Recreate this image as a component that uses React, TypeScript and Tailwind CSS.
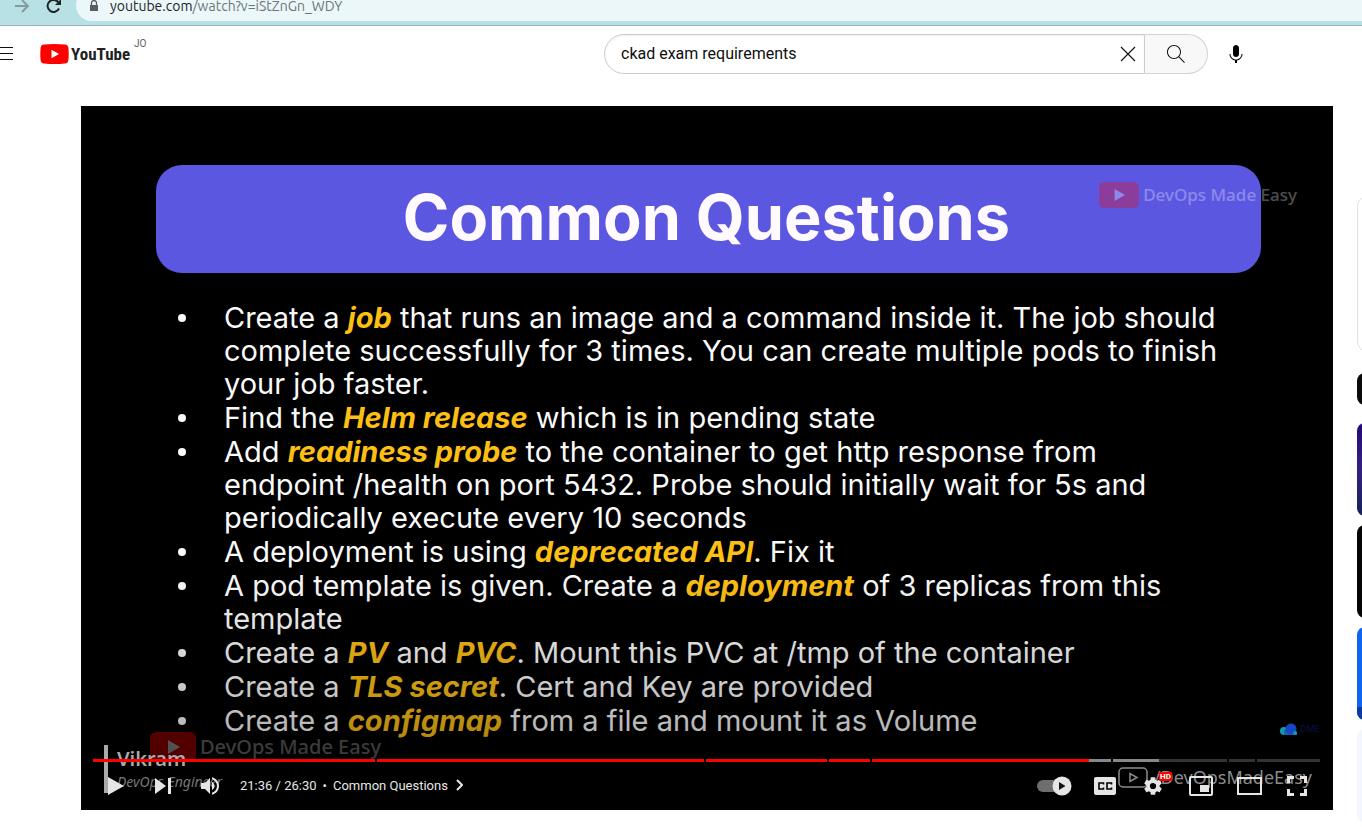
import React from "react";

type Part = { t: string; hot?: boolean };

const questions: Part[][][] = [
  [
    [{ t: "Create a " }, { t: "job", hot: true }, { t: " that runs an image and a command inside it. The job should" }],
    [{ t: "complete successfully for 3 times. You can create multiple pods to finish" }],
    [{ t: "your job faster." }],
  ],
  [[{ t: "Find the " }, { t: "Helm release", hot: true }, { t: " which is in pending state" }]],
  [
    [{ t: "Add " }, { t: "readiness probe", hot: true }, { t: " to the container to get http response from" }],
    [{ t: "endpoint /health on port 5432. Probe should initially wait for 5s and" }],
    [{ t: "periodically execute every 10 seconds" }],
  ],
  [[{ t: "A deployment is using " }, { t: "deprecated API", hot: true }, { t: ". Fix it" }]],
  [
    [{ t: "A pod template is given. Create a " }, { t: "deployment", hot: true }, { t: " of 3 replicas from this" }],
    [{ t: "template" }],
  ],
  [[{ t: "Create a " }, { t: "PV", hot: true }, { t: " and " }, { t: "PVC", hot: true }, { t: ". Mount this PVC at /tmp of the container" }]],
  [[{ t: "Create a " }, { t: "TLS secret", hot: true }, { t: ". Cert and Key are provided" }]],
  [[{ t: "Create a " }, { t: "configmap", hot: true }, { t: " from a file and mount it as Volume" }]],
];

const chapters = [
  { size: 282, played: 100, loaded: 100 },
  { size: 327, played: 100, loaded: 100 },
  { size: 121, played: 100, loaded: 100 },
  { size: 41, played: 100, loaded: 100 },
  { size: 239, played: 91, loaded: 100 },
  { size: 114, played: 0, loaded: 40 },
  { size: 26, played: 0, loaded: 0 },
  { size: 63, played: 0, loaded: 0 },
];

function BrowserBar() {
  return (
    <div className="flex h-[26px] items-start overflow-hidden border-b border-[#93b5b8] bg-[#b8e1e5] pl-[14px] font-['Ubuntu','Noto_Sans',sans-serif]">
      <button aria-label="Forward" className="-mt-0.5 w-4">
        <svg viewBox="0 0 16 16" className="size-4" fill="none" stroke="#829b9e" strokeWidth="1.8"><path d="M1 8h13M8 2l6 6-6 6" /></svg>
      </button>
      <button aria-label="Reload" className="-mt-0.5 ml-4 w-4">
        <svg viewBox="0 0 16 16" className="size-4" fill="none" stroke="#202426" strokeWidth="2"><path d="M13 10.5A6 6 0 1 1 12.5 4.5" /><path d="M15 1v6H9z" fill="#202426" stroke="none" /></svg>
      </button>
      <div className="-mt-2.5 ml-[14px] flex h-[31px] flex-1 items-center rounded-l-full bg-[#ebf7f8] pl-[14px]">
        <svg viewBox="0 0 8 12" className="h-3 w-2" fill="#5a6062"><path d="M0 5h8v6H0z" /><path d="M1.500 5.500V3a2.500 2.500 0 0 1 5 0v2.500" fill="none" stroke="#5a6062" strokeWidth="1.3" /></svg>
        <span className="ml-3 text-sm leading-5 text-[#202426]">youtube.com<span className="text-[#6b7678]">/watch?v=iStZnGn_WDY</span></span>
      </div>
    </div>
  );
}

function Masthead() {
  return (
    <header className="flex h-14 items-center">
      <div className="flex flex-1 items-center">
        <button aria-label="Guide" className="w-[13px]">
          <svg viewBox="0 0 13 14" className="h-[14px] w-[13px]" stroke="#0f0f0f"><path d="M0 .5h13M0 6.500h13M0 12.500h13" /></svg>
        </button>
        <a href="#home" className="ml-[27px] flex items-center" aria-label="YouTube Home">
          <svg viewBox="0 0 29 20" className="h-5 w-[29px]"><path d="M4 .5Q14.500-.5 25 .5 28 .8 28.400 4 29 10 28.400 16 28 19.200 25 19.500 14.500 20.500 4 19.500 1 19.200.6 16 0 10 .6 4 1 .8 4 .5z" fill="#f00" /><path d="M11.500 5.700v8.600l7.500-4.300z" fill="#fff" /></svg>
          <span className="ml-0.5 font-['Liberation_Sans_Narrow','Roboto_Condensed',Roboto,sans-serif] text-[17px] leading-6 font-bold text-[#212121]">YouTube</span>
          <span className="mb-5 ml-1 font-[Roboto,sans-serif] text-[10px] leading-3 text-[#606060]">JO</span>
        </a>
      </div>
      <form className="mr-[114px] flex h-10 w-[644px] items-center">
        <div className="flex h-10 flex-1 items-center rounded-l-full border border-[#ccc] pr-1 pl-4 shadow-[inset_0_1px_2px_#eee]">
          <input aria-label="Search" defaultValue="ckad exam requirements" className="min-w-0 flex-1 bg-transparent font-[Roboto,sans-serif] text-base text-[#0f0f0f] outline-none" />
          <button type="button" aria-label="Clear search" className="flex size-6 items-center justify-center">
            <svg viewBox="0 0 16 16" className="size-4" fill="none" stroke="#0f0f0f" strokeWidth="1.100"><path d="M1 1l14 14M15 1L1 15" /></svg>
          </button>
        </div>
        <button type="button" aria-label="Search videos" className="flex h-10 w-[63px] items-center justify-center rounded-r-full border border-l-0 border-[#d3d3d3] bg-[#f8f8f8]">
          <svg viewBox="0 0 24 24" className="size-6" fill="#0f0f0f"><path d="m20.870 20.170-5.590-5.590C16.350 13.350 17 11.750 17 10c0-3.870-3.130-7-7-7s-7 3.130-7 7 3.130 7 7 7c1.750 0 3.350-.65 4.580-1.710l5.590 5.590.7-.71zM10 16c-3.310 0-6-2.690-6-6s2.690-6 6-6 6 2.690 6 6-2.690 6-6 6z" /></svg>
        </button>
        <button type="button" aria-label="Search with your voice" className="ml-4 flex size-6 items-center justify-center">
          <svg viewBox="0 0 24 24" className="size-6" fill="#030303"><path d="M12 3c-1.660 0-3 1.370-3 3.070v5.860c0 1.700 1.340 3.070 3 3.070s3-1.370 3-3.070V6.070C15 4.370 13.660 3 12 3zm6.500 9h-1c0 3.030-2.470 5.500-5.500 5.500S6.500 15.030 6.500 12h-1c0 3.240 2.390 5.930 5.500 6.410V21h2v-2.590c3.110-.48 5.500-3.170 5.500-6.410z" /></svg>
        </button>
      </form>
    </header>
  );
}

function Brand({ className }: { className: string }) {
  return (
    <span className={className}>
      <svg viewBox="0 0 46 30" className="h-full w-auto"><rect width="46" height="30" rx="6" fill="#f00" /><path d="M18 8v14l12-7z" fill="#fff" /></svg>
      <span>DevOps Made Easy</span>
    </span>
  );
}

function Progress() {
  return (
    <div className="flex h-[3px] gap-0.5" role="presentation">
      {chapters.map((c, i) => (
        <div key={i} className="relative bg-[#333]" style={{ flexGrow: c.size, flexBasis: 0 }}>
          <div className="absolute inset-y-0 left-0 bg-[#888]" style={{ width: `${c.loaded}%` }} />
          <div className="absolute inset-y-0 left-0 bg-[#f00]" style={{ width: `${c.played}%` }} />
        </div>
      ))}
    </div>
  );
}

function Controls() {
  return (
    <div className="absolute right-[13px] bottom-0 left-3 text-[#e6e6e6]">
      <Progress />
      <div className="flex h-12 items-center justify-between">
        <div className="flex items-center">
          <button aria-label="Play" className="flex h-12 w-[46px] items-center justify-center">
            <svg viewBox="0 0 16 18" className="h-[18px] w-4" fill="currentColor"><path d="M0 0v18l16-9z" /></svg>
          </button>
          <button aria-label="Next" className="flex h-12 w-12 items-center justify-center">
            <svg viewBox="0 0 16 16" className="size-4" fill="currentColor"><path d="M0 0v16l11-8zM13 0h3v16h-3z" /></svg>
          </button>
          <button aria-label="Mute" className="flex h-12 w-12 items-center justify-center">
            <svg viewBox="8 8 20 20" className="size-5" fill="currentColor"><path d="M8 21h4l5 5V10l-5 5H8zm11-7v8c1.480-.68 2.500-2.230 2.500-4s-1.020-3.260-2.500-4zm0-2.710c2.890.86 5 3.540 5 6.710s-2.110 5.850-5 6.710v2.060c4.010-.91 7-4.490 7-8.770s-2.990-7.860-7-8.770z" /></svg>
          </button>
          <span className="mb-0.5 ml-[5px] flex items-center font-[Roboto,sans-serif] text-[13px]">
            <span>21:36 / 26:30</span>
            <span className="mx-[6px]">•</span>
            <button className="flex items-center gap-2">Common Questions
              <svg viewBox="0 0 7 12" className="h-3 w-[7px]" fill="none" stroke="currentColor" strokeWidth="2"><path d="M1 1l5 5-5 5" /></svg>
            </button>
          </span>
        </div>
        <div className="flex items-center">
          <button aria-label="Autoplay" className="flex h-12 w-[54px] items-center justify-center">
            <svg viewBox="0 0 36 20" className="h-5 w-9"><rect x="1" y="4" width="30" height="12" rx="6" fill="#6e6e6e" /><circle cx="26" cy="10" r="9.500" fill="#e6e6e6" /><path d="M23 6v8l6.500-4z" fill="#111" /></svg>
          </button>
          <button aria-label="Captions" className="flex h-12 w-12 items-center justify-center">
            <svg viewBox="0 0 22 18" className="h-[18px] w-[22px]"><rect width="22" height="18" rx="2" fill="#e6e6e6" /><path d="M9.500 7.500V6H5v6h4.500v-1.500M17.500 7.500V6H13v6h4.500v-1.500" fill="none" stroke="#000" strokeWidth="1.600" /></svg>
          </button>
          <button aria-label="Settings" className="relative flex h-12 w-12 items-center justify-center">
            <svg viewBox="9 9 18 18" className="size-5" fill="currentColor"><path d="m23.940 18.780c.03-.25.05-.51.05-.78 0-.27-.02-.52-.05-.78l1.680-1.320c.15-.12.19-.33.09-.51l-1.600-2.760c-.09-.17-.31-.24-.48-.17l-1.990.8c-.41-.32-.86-.58-1.350-.78l-.3-2.120c-.02-.19-.19-.33-.39-.33h-3.200c-.2 0-.36.14-.39.33l-.3 2.120c-.48.2-.93.47-1.350.78l-1.990-.8c-.18-.07-.39 0-.48.17l-1.600 2.760c-.1.170-.05.39.09.51l1.680 1.320c-.03.25-.05.52-.05.78s.02.52.05.78l-1.680 1.320c-.15.12-.19.33-.09.51l1.600 2.760c.09.170.31.24.48.17l1.990-.8c.41.32.86.58 1.350.78l.3 2.120c.02.19.19.33.39.33h3.200c.2 0 .36-.14.39-.33l.3-2.120c.48-.2.93-.47 1.350-.78l1.990.8c.18.07.39 0 .48-.17l1.600-2.760c.09-.17.05-.39-.09-.51zM18 20.800a2.800 2.800 0 1 1 0-5.600 2.800 2.800 0 0 1 0 5.600z" fillRule="evenodd" /></svg>
            <span className="absolute top-2.5 right-[5px] w-[13px] rounded-[1px] bg-[#f00] text-center font-[Roboto,sans-serif] text-[8px] leading-[9px] font-bold text-white">HD</span>
          </button>
          <button aria-label="Miniplayer" className="flex h-12 w-12 items-center justify-center">
            <svg viewBox="0 0 24 20" className="h-5 w-6"><rect x="1" y="1" width="22" height="18" rx="1" fill="none" stroke="currentColor" strokeWidth="2" /><path d="M11 9h9v7h-9z" fill="currentColor" /></svg>
          </button>
          <button aria-label="Theater mode" className="flex h-12 w-12 items-center justify-center">
            <svg viewBox="0 0 25 18" className="h-[18px] w-[25px]"><path d="M1 1h23v16H1z" fill="none" stroke="currentColor" strokeWidth="2" /></svg>
          </button>
          <button aria-label="Full screen" className="flex h-12 w-[47px] items-center justify-center">
            <svg viewBox="0 0 20 20" className="size-5" fill="none" stroke="currentColor" strokeWidth="3"><path d="M1.500 7V1.500H7M13 1.500h5.500V7M18.500 13v5.500H13M7 18.500H1.500V13" /></svg>
          </button>
        </div>
      </div>
    </div>
  );
}

function Player() {
  return (
    <main className="relative aspect-video min-w-0 flex-1 overflow-hidden bg-black pt-[59px] pr-[72px] pl-[75px]">
      <h1 className="flex h-[108px] items-center justify-center rounded-[26px] bg-[#5b57e0] pr-1 pb-1 font-[Inter,sans-serif] text-[63px] font-bold text-[#fffaff]">Common Questions</h1>
      <ul className="mt-7 flex flex-col gap-px pl-[22px] font-[Inter,sans-serif] text-[29px] leading-[33px] font-normal text-[#fafafa]">
        {questions.map((lines, i) => (
          <li key={i} className="flex">
            <span className="mt-[13px] mr-[38px] size-2 shrink-0 rounded-full bg-[#fafafa]" />
            <div className="whitespace-pre">
              {lines.map((parts, k) => (
                <p key={k}>
                  {parts.map((p, j) => (p.hot ? <b key={j} className="font-bold text-[#fcbf14] italic">{p.t}</b> : <span key={j}>{p.t}</span>))}
                </p>
              ))}
            </div>
          </li>
        ))}
      </ul>
      <Brand className="absolute top-[76px] right-[36px] flex h-[26px] items-center gap-1 font-['Noto_Sans',sans-serif] text-[17px] font-medium text-white opacity-30" />
      <Brand className="absolute bottom-[48px] left-[69px] flex h-[30px] items-center gap-1 font-['Noto_Sans',sans-serif] text-xl font-medium text-[#bbb] opacity-45" />
      <div className="absolute inset-x-0 bottom-0 h-60 bg-linear-to-t from-black/40 to-transparent" />
      <div className="absolute bottom-[17px] left-[23px] border-l-4 border-[#aaa] pl-[9px] font-['Noto_Sans',sans-serif] text-[#aaa]">
        <div className="text-xl leading-7 font-semibold">Vikram</div>
        <div className="pb-0.5 text-sm leading-[18px] text-[#777] italic">DevOps Engineer</div>
      </div>
      <div className="absolute right-[13px] bottom-[75px] flex items-center gap-0.5 font-[Inter,sans-serif] text-[9px] text-[#0b104a]">
        <svg viewBox="0 0 18 12" className="h-3 w-[18px]"><circle cx="4" cy="8" r="4" fill="#1695ae" /><path d="M4 12V8l5-6 8 7v3z" fill="#1265b0" /><circle cx="11" cy="6" r="5.500" fill="#1746c5" /><circle cx="15" cy="10" r="2" fill="#1695ae" /></svg>
        DME
      </div>
      <div className="absolute right-[21px] bottom-[19px] flex items-center gap-1.5 font-['Noto_Sans',sans-serif] text-lg text-[#8c8c8c]">
        <svg viewBox="0 0 30 21" className="h-[21px] w-[30px]" fill="none" stroke="#8c8c8c" strokeWidth="1.500"><rect x="1" y="1" width="28" height="19" rx="4" /><path d="M12 6.500v8l7-4z" /></svg>
        /DevOpsMadeEasy
      </div>
      <Controls />
    </main>
  );
}

function Related() {
  return (
    <aside className="flex w-[5px] shrink-0 flex-col overflow-hidden pt-[89px]">
      <div className="h-[158px] w-96 shrink-0 rounded-xl border border-[#e0e0e0]" />
      <div className="mt-5 h-8 w-16 shrink-0 rounded-lg bg-[#0a0a0a]" />
      <div className="mt-[18px] flex flex-col gap-[9px]">
        <div className="h-[93px] w-40 shrink-0 rounded-lg bg-linear-to-b from-[#24077a] via-[#352080] to-[#14215a]" />
        <div className="h-[93px] w-40 shrink-0 rounded-lg bg-[#050505]" />
        <div className="h-[93px] w-40 shrink-0 overflow-hidden rounded-lg bg-[#0f65f0] pt-20">
          <div className="h-[13px] bg-[#0b3aa0]" />
        </div>
        <div className="h-[93px] w-40 shrink-0 rounded-lg bg-[#f3f6fd]" />
      </div>
    </aside>
  );
}

export default function App() {
  return (
    <div className="min-h-screen overflow-hidden bg-white">
      <BrowserBar />
      <Masthead />
      <div className="mt-6 flex items-start gap-6 pl-[81px]">
        <Player />
        <Related />
      </div>
    </div>
  );
}
